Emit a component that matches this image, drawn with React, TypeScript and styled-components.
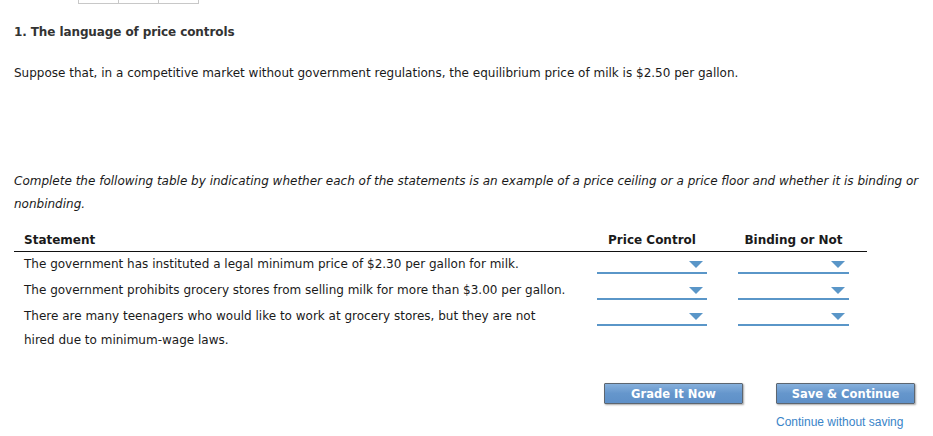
import React from "react";
import styled, { createGlobalStyle } from "styled-components";

const Global = createGlobalStyle`
  html, body { margin: 0; padding: 0; background: #fff; }
  body { font-family: "DejaVu Sans", Verdana, sans-serif; color: #1a1a1a; }
`;

const Page = styled.div`
  width: 933px;
  height: 436px;
  overflow: hidden;
  position: relative;
`;

const TabStrip = styled.div`
  display: flex;
  margin-left: 78px;
  height: 4px;
`;

const Tab = styled.div`
  width: 39px;
  height: 3px;
  border: 1px solid #c8c8c8;
  border-top: none;
  & + & { border-left: none; }
`;

const Content = styled.div`
  padding-left: 14px;
`;

const Title = styled.h1`
  margin: 20px 0 0;
  font-size: 12px;
  line-height: 16px;
  font-weight: bold;
  color: #333;
  letter-spacing: -0.1px;
`;

const Para = styled.p`
  margin: 25px 0 0;
  font-size: 12px;
  line-height: 16px;
`;

const Instruction = styled.p`
  margin: 89px 0 0;
  font-size: 12px;
  line-height: 23px;
  font-style: italic;
  width: 912px;
`;

const Table = styled.div`
  margin-top: 14px;
  width: 853px;
`;

const Row = styled.div<{ $head?: boolean }>`
  display: grid;
  grid-template-columns: 583px 141px 129px;
  align-items: start;
  ${(p) =>
    p.$head
      ? `border-bottom: 1px solid #111; padding: 2px 0 3px; font-weight: bold;`
      : `padding: 0 0 2px;`}
`;

const Cell = styled.div<{ $head?: boolean }>`
  font-size: 12px;
  line-height: ${(p) => (p.$head ? "16px" : "24px")};
`;

const StatementCell = styled(Cell)`
  padding-left: 10px;
  padding-right: 30px;
`;

const HeadCtl = styled(Cell)<{ $w: number }>`
  width: ${(p) => p.$w}px;
  text-align: center;
`;

const Dropdown = styled.div<{ $w: number }>`
  width: ${(p) => p.$w}px;
  height: 20px;
  border-bottom: 2px solid #5a96c8;
  position: relative;
  cursor: pointer;
`;

const Arrow = styled.span`
  position: absolute;
  right: 4px;
  top: 9px;
  width: 0;
  height: 0;
  border-left: 7px solid transparent;
  border-right: 7px solid transparent;
  border-top: 7px solid #5a96c8;
`;

const Actions = styled.div`
  display: flex;
  justify-content: flex-end;
  gap: 33px;
  margin-top: 29px;
  padding-right: 18px;
`;

const ActionCol = styled.div`
  display: flex;
  flex-direction: column;
  align-items: flex-start;
`;

const Button = styled.button`
  width: 139px;
  height: 21px;
  border: 1px solid #5d6670;
  border-radius: 1px;
  background: linear-gradient(#86b0dc, #6596cc 50%, #5e90c8);
  color: #fff;
  font-family: "DejaVu Sans", Verdana, sans-serif;
  font-weight: bold;
  font-size: 11.5px;
  padding: 0;
  box-shadow: 1px 1px 2px rgba(0, 0, 0, 0.35);
  cursor: pointer;
`;

const Link = styled.a`
  margin-top: 11px;
  font-family: "Liberation Sans", Arial, sans-serif;
  font-size: 12px;
  color: #3a84c8;
  text-decoration: none;
`;

const rows = [
  "The government has instituted a legal minimum price of $2.30 per gallon for milk.",
  "The government prohibits grocery stores from selling milk for more than $3.00 per gallon.",
  "There are many teenagers who would like to work at grocery stores, but they are not hired due to minimum-wage laws.",
];

export default function App() {
  return (
    <Page>
      <Global />
      <TabStrip>
        <Tab />
        <Tab />
        <Tab />
      </TabStrip>
      <Content>
        <Title>1. The language of price controls</Title>
        <Para>
          Suppose that, in a competitive market without government regulations, the equilibrium price of milk is $2.50 per gallon.
        </Para>
        <Instruction>
          Complete the following table by indicating whether each of the statements is an example of a price ceiling or a price floor and whether it is binding or nonbinding.
        </Instruction>
        <Table>
          <Row $head>
            <StatementCell $head>Statement</StatementCell>
            <HeadCtl $head $w={110}>Price Control</HeadCtl>
            <HeadCtl $head $w={111}>Binding or Not</HeadCtl>
          </Row>
          {rows.map((r) => (
            <Row key={r}>
              <StatementCell>{r}</StatementCell>
              <Dropdown $w={110}>
                <Arrow />
              </Dropdown>
              <Dropdown $w={111}>
                <Arrow />
              </Dropdown>
            </Row>
          ))}
        </Table>
      </Content>
      <Actions>
        <ActionCol>
          <Button>Grade It Now</Button>
        </ActionCol>
        <ActionCol>
          <Button>Save &amp; Continue</Button>
          <Link href="#">Continue without saving</Link>
        </ActionCol>
      </Actions>
    </Page>
  );
}
